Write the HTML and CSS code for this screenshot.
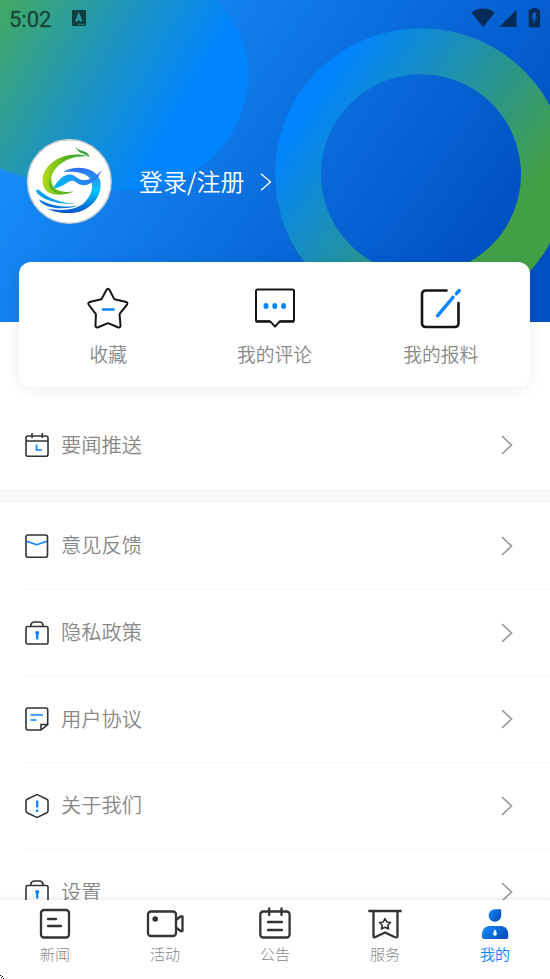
FILE: index.html
```html
<!DOCTYPE html>
<html lang="zh-CN">
<head>
<meta charset="utf-8">
<title>我的</title>
<link rel="stylesheet" href="styles.css">
</head>
<body>
<div class="app">
  <header class="hero">
    <svg class="hero-art" viewBox="0 0 550 322" aria-hidden="true">
      <defs>
        <linearGradient id="bg" gradientUnits="userSpaceOnUse" x1="60" y1="60" x2="440" y2="330"><stop offset="0" stop-color="#178ffb"/><stop offset="1" stop-color="#0050c2"/></linearGradient>
        <linearGradient id="blob" gradientUnits="userSpaceOnUse" x1="0" y1="0" x2="187" y2="108"><stop offset="0" stop-color="#43aa62"/><stop offset=".5" stop-color="#2096b8"/><stop offset="1" stop-color="#0084ff"/></linearGradient>
        <linearGradient id="ring" gradientUnits="userSpaceOnUse" x1="256" y1="178" x2="447" y2="311"><stop offset="0" stop-color="#0084ff"/><stop offset="1" stop-color="#43a047"/></linearGradient>
      </defs>
      <path fill="url(#bg)" d="M0 0H550V322H0z"/>
      <path fill="url(#blob)" d="M0 0H215C236 20 248 46 248 73C248 138 196 190 130 190C80 190 35 184 0 168z"/>
      <circle cx="421" cy="174.300" r="123" fill="none" stroke="url(#ring)" stroke-width="46"/>
    </svg>
    <div class="status">
      <span class="clock">5:02</span>
      <svg class="ime" width="14" height="16" viewBox="0 0 14 16"><rect width="14" height="16" rx="1" fill="#103f43"/><path d="M4 11.500 6.800 4.500 9.600 11.500M5 9.500H8.600" fill="none" stroke="#2b9fa0" stroke-width="1.800"/><path d="M7 14.300H13" stroke="#2b9fa0" stroke-dasharray="1.500 .7"/></svg>
      <svg class="signals" width="70" height="22" viewBox="0 0 70 22"><g fill="#052c58"><path d="M1.300 5.500C8 .3 18 .3 24.700 5.500L13.200 20z"/><path d="M29 20 46.500 2.800V20z"/><path d="M59.500 2.500H62V1H67V2.500H69Q70 2.500 70 3.500V19Q70 20.500 69 20.500H60Q58.700 20.500 58.700 19V3.500Q58.700 2.500 59.500 2.500z"/></g><path d="M63.300 5.500H66.500L65.500 9.500H67L63.300 17V11.500H61.500z" fill="#0a61ce"/></svg>
    </div>
    <div class="profile">
      <svg class="avatar" viewBox="0 0 86 86">
        <defs>
          <linearGradient id="lg" x1="0" y1="0" x2="1" y2="0"><stop offset="0" stop-color="#b4dc1c"/><stop offset=".45" stop-color="#62b81d"/><stop offset="1" stop-color="#129b37"/></linearGradient>
          <linearGradient id="lb" x1="0" y1="0" x2="0" y2="1"><stop offset="0" stop-color="#356df0"/><stop offset=".5" stop-color="#00c7ff"/><stop offset="1" stop-color="#0752c9"/></linearGradient>
          <linearGradient id="lw" x1="0" y1="0" x2="1" y2="0"><stop offset="0" stop-color="#00b9f5"/><stop offset="1" stop-color="#3b6df0"/></linearGradient>
        </defs>
        <circle cx="43.300" cy="42.500" r="41.800" fill="#fff" stroke="#c9ccd0" stroke-width="1.500"/>
        <path fill="#30a52c" d="M49 7C51 11 55 11 58 12.500C62 14 63 16 63.500 18C58 14 52 15 49 7z"/>
        <path fill="url(#lg)" d="M63 17.500C40 10 17 24 16.500 41C16 56 31 59 48 52.500C36 54 27 52 25.500 42C24 29 42 15 63 17.500z"/>
        <path fill="#4db31d" d="M24.500 38C23.500 47 27 52 37 54.500C27 55 20 48 24.500 38z"/>
        <path fill="url(#lb)" d="M37 33C50 25.500 69 28 74 41C78 58 62 74 45 74C34 74.500 27 72.500 21 69.500C36 72.500 50 71 58 64C65 57 68 48 65 41C61 34 51 32 37 33z"/>
        <path fill="url(#lw)" d="M27 49.500C34 37 43 32 50 38C57 44 67 41 76 31C70 43 60 50 51 44C43 37 40 49 27 49.500z"/>
        <path fill="#009fe8" d="M10 52Q11 49 14 52C22 59 36 65 50 64.500C34 66 14 61 10 52z"/>
        <path fill="#0874dc" d="M13 60.500C26 67 39 69.500 54 66C42 71 18 71 13 60.500z"/>
      </svg>
      <span class="login">登录/注册</span>
      <svg class="login-arrow" width="12" height="18" viewBox="0 0 12 18"><path d="M1 .8 10.500 9 1 17.200" fill="none" stroke="#fff" stroke-width="1.300"/></svg>
    </div>
  </header>

  <section class="card">
    <div class="action">
      <svg viewBox="0 0 44 44"><path d="M20.400 3Q22 .4 23.600 3L28 11.600Q28.400 12.400 29.300 12.600L39.500 14.700Q42.500 15.500 40.800 18L34 26.300Q33.500 27 33.600 28L34.500 38.200Q34.500 41.200 31.800 40.200L23.300 36.600Q22 36 20.700 36.600L12.200 40.200Q9.500 41.200 9.500 38.200L9.900 28Q10 27 9.300 26.300L2.900 18Q1.200 15.500 4.500 14.700L14.300 12.600Q15.300 12.400 15.800 11.600z" fill="none" stroke="#151515" stroke-width="2"/><path d="M17 22.500H27.500" stroke="#0a84ff" stroke-width="2.600" stroke-linecap="round"/></svg>
      <span>收藏</span>
    </div>
    <div class="action">
      <svg viewBox="0 0 44 44"><path d="M4.500 2.500H39.500Q41 2.500 41 4V33Q41 34.600 39.500 34.600H26.500L22 39.600 17.500 34.600H4.500Q3 34.600 3 33V4Q3 2.500 4.500 2.500z" fill="none" stroke="#151515" stroke-width="2" stroke-linejoin="round"/><path d="M2.800 34.400H17M26.500 34.400H41" stroke="#151515" stroke-width="2.200"/><g fill="#0a84ff"><ellipse cx="13" cy="19" rx="2.500" ry="2.900"/><ellipse cx="21.800" cy="19" rx="2.500" ry="2.900"/><ellipse cx="30.600" cy="19" rx="2.500" ry="2.900"/></g></svg>
      <span>我的评论</span>
    </div>
    <div class="action">
      <svg viewBox="0 0 44 44"><path d="M27.500 3.500H7Q3 3.500 3 7.500V36Q3 40 7 40H35.500Q39.500 40 39.500 36V16" fill="none" stroke="#151515" stroke-width="2.600" stroke-linecap="round"/><path d="M18.500 28.800 34 10.400M37.500 6.700 40.200 3.600" stroke="#0a84ff" stroke-width="3.400" stroke-linecap="round"/></svg>
      <span>我的报料</span>
    </div>
  </section>

  <main class="menu">
    <div class="row"><svg class="icon" viewBox="0 0 26 26"><rect x="2" y="4" width="22" height="20.300" rx="2"/><path d="M2 9H24M8 1V6M18.300 1V6"/><path class="blue" d="M12.500 12.500V18H18"/></svg><span>要闻推送</span><svg class="chevron" viewBox="0 0 12 20"><path d="M1 1 10.500 10 1 19"/></svg></div>
    <div class="gap"></div>
    <div class="row"><svg class="icon" viewBox="0 0 26 26"><rect x="2" y="2" width="21.500" height="22.300" rx="2"/><path class="blue" d="M2.500 8.300 12.700 11.700 23 8.300"/></svg><span>意见反馈</span><svg class="chevron" viewBox="0 0 12 20"><path d="M1 1 10.500 10 1 19"/></svg></div>
    <div class="row line"><svg class="icon" viewBox="0 0 26 26"><rect x="2" y="6.500" width="22" height="17.500" rx="1.500"/><path d="M6.800 6V5Q7.500 2 10.500 2H15.500Q18.500 2 19 5V6"/><circle class="dot" cx="13.200" cy="13" r="2"/><path class="blue thick" d="M13.200 13V19.500"/></svg><span>隐私政策</span><svg class="chevron" viewBox="0 0 12 20"><path d="M1 1 10.500 10 1 19"/></svg></div>
    <div class="row line"><svg class="icon" viewBox="0 0 26 26"><path d="M17 24H4Q2 24 2 22V4Q2 2 4 2H22Q23.700 2 23.700 4V18.500zM17 24V18.500H23.500"/><path class="blue" d="M6.500 9H19M6.500 14H12.500"/></svg><span>用户协议</span><svg class="chevron" viewBox="0 0 12 20"><path d="M1 1 10.500 10 1 19"/></svg></div>
    <div class="row line"><svg class="icon" viewBox="0 0 26 26"><path d="M12.200 1.900Q13 1.500 13.800 1.900L22.800 6.300Q24 6.900 24 8.200V17.800Q24 19 22.800 19.700L13.800 24.100Q13 24.500 12.200 24.100L3.200 19.700Q2 19 2 17.800V8.200Q2 6.900 3.200 6.300z"/><path class="blue thick" d="M13.200 7.500V14.500M13.200 16.500V19"/></svg><span>关于我们</span><svg class="chevron" viewBox="0 0 12 20"><path d="M1 1 10.500 10 1 19"/></svg></div>
    <div class="row line"><svg class="icon" viewBox="0 0 26 26"><rect x="2" y="6.500" width="22" height="17.500" rx="1.500"/><path d="M6.800 6V5Q7.500 2 10.500 2H15.500Q18.500 2 19 5V6"/><circle class="dot" cx="13.200" cy="13" r="2"/><path class="blue thick" d="M13.200 13V19.500"/></svg><span>设置</span><svg class="chevron" viewBox="0 0 12 20"><path d="M1 1 10.500 10 1 19"/></svg></div>
  </main>

  <nav class="tabs">
    <div class="tab"><svg viewBox="0 0 40 34"><rect x="6" y="3" width="28" height="27.500" rx="3"/><path d="M13 12H21M13 19H26"/></svg><span>新闻</span></div>
    <div class="tab"><svg viewBox="0 0 40 34"><rect x="3" y="4.500" width="28" height="24.500" rx="3"/><path d="M31 13 35.500 9.500H37.500V24H35.500L31 20.500"/><circle class="solid" cx="10.200" cy="12" r="2.800"/></svg><span>活动</span></div>
    <div class="tab"><svg viewBox="0 0 40 34"><rect x="5.300" y="4.500" width="29.300" height="26" rx="3"/><path d="M14.200 1.500V8M26.500 1.500V8M13 15H27M13 23H27"/></svg><span>公告</span></div>
    <div class="tab"><svg viewBox="0 0 40 34"><path class="square" d="M4.500 4H35.500M8.500 5V29Q8.500 31 10.500 30L20 25.500 29.500 30Q32.500 31 32.500 29V5"/><path class="thin" d="M20 11.500 21.800 15 25.500 15.500 22.800 18.200 23.500 22 20 20.200 16.500 22 17.200 18.200 14.500 15.500 18.200 15z"/></svg><span>服务</span></div>
    <div class="tab active"><svg viewBox="0 0 40 34"><defs><linearGradient id="me" x1="0" y1="0" x2="1" y2=".5"><stop offset="0" stop-color="#168fff"/><stop offset="1" stop-color="#0550c0"/></linearGradient></defs><path class="fill" d="M20 2.200H26.200V8.700A6.300 6.300 0 1 1 20 2.200z"/><path class="fill" d="M13.500 19H27Q33.300 20.500 33.300 28V30Q33.300 32 31.300 32H9Q7 32 7 30V28Q7 20.500 13.500 19z"/><path fill="#fff" d="M20 22Q23.700 28.800 20 28.800Q16.300 28.800 20 22z"/></svg><span>我的</span></div>
    <svg class="corner" width="4" height="4" viewBox="0 0 4 4" shape-rendering="crispEdges"><path d="M0 0H1V1H0zM2 1H3V2H2zM1 2H2V3H1zM3 3H4V4H3z"/></svg>
  </nav>
</div>
</body>
</html>
```
FILE: styles.css
```css
* { box-sizing: border-box; }
body {
  margin: 0;
  background: #fff;
  font-family: "Noto Sans CJK SC", sans-serif;
  font-weight: 350;
  color: #888;
}
svg { display: block; flex: none; }
.app { height: 979px; display: flex; flex-direction: column; overflow: hidden; position: relative; }
.hero { position: relative; height: 322px; flex: none; }
.hero-art { position: absolute; inset: 0; width: 550px; height: 322px; }
.status { position: relative; display: flex; align-items: flex-start; height: 139px; padding: 7px 10px 0 9px; }
.clock { width: 63px; font: 400 22px/25px Roboto, sans-serif; color: #174638; -webkit-text-stroke: .3px #174638; }
.ime { margin-top: 3px; }
.signals { margin-left: auto; }
.profile { position: relative; display: flex; align-items: center; height: 85px; padding-left: 26px; }
.avatar { width: 86px; height: 86px; }
.login { margin-left: 27px; padding-bottom: 2px; font-size: 24px; line-height: 36px; color: #fff; white-space: nowrap; }
.login-arrow { margin-left: 16px; }
.card {
  position: relative;
  flex: none;
  display: flex;
  height: 125px;
  margin: -60.400px 20px 0 19px;
  padding: 0 6px;
  border-radius: 12px;
  background: #fff;
  box-shadow: 0 2px 16px rgba(0, 0, 0, .07);
}
.action { flex: 1; display: flex; flex-direction: column; align-items: center; padding-top: 25px; font-size: 18.800px; line-height: 28px; }
.action svg { width: 44px; height: 44px; margin: 0 0 9px .5px; }
.menu { flex: none; padding-top: 15.600px; }
.row { display: flex; align-items: center; height: 86.500px; padding: 0 37px 0 24px; font-size: 20.300px; }
.row span { margin-left: 11px; flex: 1; line-height: 30px; padding-bottom: 3px; }
.row.line { margin-left: 25px; padding-left: 0; border-top: 1px solid #f7f7f7; }
.row.line .icon { margin-left: -1px; }
.gap { height: 14px; background: #f7f7f7; }
.icon { width: 26px; height: 26px; fill: none; stroke: #333; stroke-width: 1.600; }
.icon .blue { stroke: #0a84ff; stroke-width: 1.700; }
.icon .thick { stroke-width: 2.300; }
.icon .dot { fill: #0a84ff; stroke: none; }
.chevron { width: 12px; height: 20px; fill: none; stroke: #999; stroke-width: 1.700; }
.tabs {
  position: absolute;
  inset: 900px 0 0;
  display: flex;
  background: #fff;
  box-shadow: 0 -1px 5px rgba(0, 0, 0, .1);
}
.tab { flex: 1; display: flex; flex-direction: column; align-items: center; padding-top: 7px; font-size: 15px; font-weight: 300; line-height: 22px; }
.tab svg { width: 40px; height: 34px; margin-bottom: 2px; fill: none; stroke: #333; stroke-width: 2.300; stroke-linecap: round; stroke-linejoin: round; }
.tab .solid { fill: #333; stroke: none; }
.tab .thin { stroke-width: 1.600; }
.tab .square { stroke-linecap: square; }
.tab .fill { fill: url(#me); }
.tab.active { color: #0a84ff; font-weight: 350; }
.tab.active svg { stroke: none; }
.tabs .corner { position: absolute; left: 0; bottom: 0; }
```
